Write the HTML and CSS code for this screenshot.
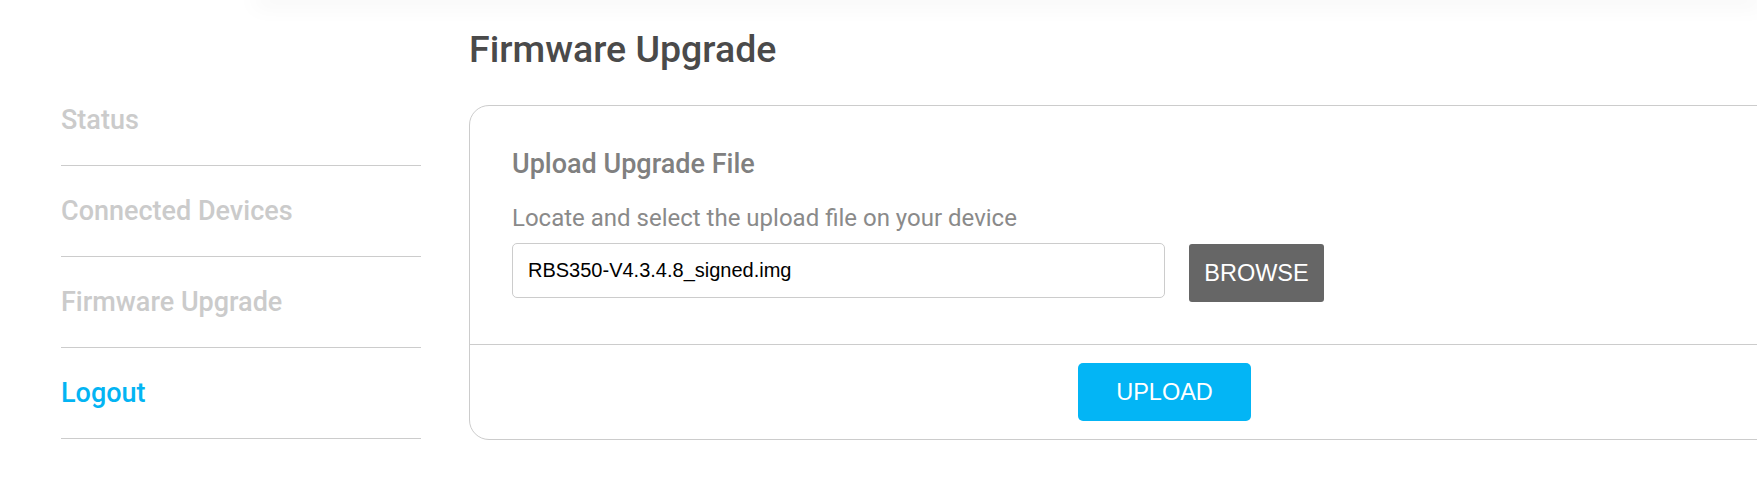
FILE: index.html
```html
<!DOCTYPE html>
<html lang="en">
<head>
<meta charset="utf-8">
<title>Firmware Upgrade</title>
<link rel="stylesheet" href="styles.css">
</head>
<body>
<div class="topbar"></div>
<div class="page">
  <nav class="sidebar">
    <a class="nav-item">Status</a>
    <a class="nav-item">Connected Devices</a>
    <a class="nav-item">Firmware Upgrade</a>
    <a class="nav-item active">Logout</a>
  </nav>
  <main class="main">
    <h1 class="title">Firmware Upgrade</h1>
    <section class="card">
      <div class="card-body">
        <h2 class="card-heading">Upload Upgrade File</h2>
        <p class="hint">Locate and select the upload file on your device</p>
        <div class="file-row">
          <div class="file-input">RBS350-V4.3.4.8_signed.img</div>
          <button class="btn btn-browse">BROWSE</button>
        </div>
      </div>
      <div class="card-footer">
        <button class="btn btn-upload">UPLOAD</button>
      </div>
    </section>
  </main>
</div>
</body>
</html>
```
FILE: styles.css
```css
html, body {
  margin: 0;
  padding: 0;
  background: #ffffff;
  overflow: hidden;
}

body {
  font-family: Roboto, "Noto Sans", sans-serif;
  width: 1757px;
  height: 499px;
}

.topbar {
  height: 0;
  margin-left: 260px;
  box-shadow: 0 0 22px 6px rgba(0, 0, 0, 0.05);
}

.page {
  display: flex;
  align-items: flex-start;
  padding-left: 61px;
}

.sidebar {
  display: flex;
  flex-direction: column;
  width: 360px;
  flex: none;
  padding-top: 75px;
}

.nav-item {
  display: flex;
  align-items: center;
  height: 90px;
  border-bottom: 1px solid #cccccc;
  font-size: 27px;
  font-weight: 500;
  color: #cbcbcb;
  text-decoration: none;
}

.nav-item.active {
  color: #03b4f3;
}

.main {
  margin-left: 48px;
  padding-top: 27px;
  flex: none;
}

.title {
  margin: 0;
  font-size: 37.5px;
  font-weight: 500;
  line-height: normal;
  color: #4a4a4a;
}

.card {
  margin-top: 34px;
  width: 1391px;
  border: 1px solid #cccccc;
  border-radius: 20px;
  box-sizing: border-box;
}

.card-body {
  padding: 42px 42px 42px 42px;
}

.card-heading {
  margin: 0;
  font-size: 27px;
  font-weight: 500;
  line-height: normal;
  color: #808080;
}

.hint {
  margin: 24px 0 0 0;
  font-size: 24px;
  font-weight: 400;
  line-height: normal;
  color: #8a8a8a;
}

.file-row {
  display: flex;
  align-items: flex-start;
  gap: 24px;
  margin-top: 11px;
}

.file-input {
  box-sizing: border-box;
  width: 653px;
  height: 55px;
  border: 1px solid #cccccc;
  border-radius: 5px;
  padding-left: 15px;
  display: flex;
  align-items: center;
  font-family: "Liberation Sans", Arial, sans-serif;
  font-size: 20px;
  color: #000000;
}

.btn {
  border: none;
  margin: 0;
  font-family: "Liberation Sans", Arial, sans-serif;
  font-size: 23.5px;
  color: #ffffff;
  display: flex;
  align-items: center;
  justify-content: center;
  box-sizing: border-box;
  height: 58px;
  padding: 0;
}

.btn-browse {
  width: 135px;
  margin-top: 1px;
  background: #666666;
  border-radius: 3px;
}

.card-footer {
  border-top: 1px solid #cccccc;
  display: flex;
  justify-content: center;
  padding: 18px 0 18px 0;
}

.btn-upload {
  width: 173px;
  background: #03b5f5;
  border-radius: 5px;
}
```
